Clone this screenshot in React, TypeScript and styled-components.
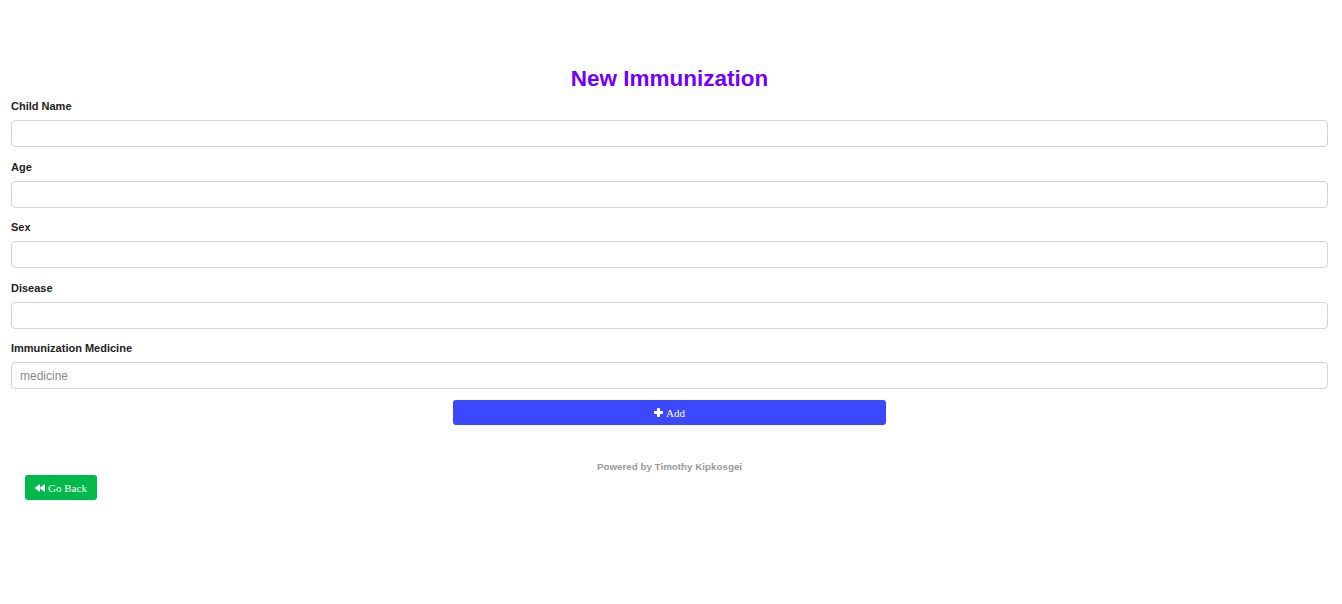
import React from "react";
import styled, { createGlobalStyle } from "styled-components";
import { FaBackward } from "react-icons/fa";

const Global = createGlobalStyle`
  html, body { margin: 0; padding: 0; background: #fff; }
  body { font-family: "Liberation Sans", Arial, sans-serif; }
  * { box-sizing: border-box; }
`;

const Page = styled.div`
  padding: 66px 14px 0 11px;
  display: flex;
  flex-direction: column;
`;

const Title = styled.h2`
  margin: 0 0 7px;
  font-size: 22.5px;
  line-height: 26px;
  font-weight: 700;
  text-align: center;
  color: #7000ff;
`;

const Form = styled.form`
  display: flex;
  flex-direction: column;
`;

const Group = styled.div`
  display: flex;
  flex-direction: column;
  margin-bottom: 12.5px;
`;

const Label = styled.label`
  font-size: 11px;
  line-height: 15px;
  font-weight: 700;
  color: #222;
  margin-bottom: 6px;
`;

const Input = styled.input`
  height: 27px;
  width: 100%;
  border: 1px solid #d4d4d4;
  border-radius: 4px;
  padding: 0 8px;
  font-family: "Liberation Sans", Arial, sans-serif;
  font-size: 12px;
  color: #333;
  background: #fff;
  outline: none;
  &::placeholder { color: #888; }
`;

const ButtonRow = styled.div`
  display: flex;
  justify-content: center;
  margin-top: -1.5px;
`;

const AddButton = styled.button`
  width: 433px;
  height: 25px;
  border: none;
  border-radius: 3px;
  background: #3b48ff;
  color: #fff;
  font-family: "Liberation Serif", "Times New Roman", serif;
  font-size: 11px;
  display: flex;
  align-items: center;
  justify-content: center;
  gap: 3px;
  cursor: pointer;
`;

const Footer = styled.p`
  margin: 36px 0 0;
  text-align: center;
  font-size: 9.8px;
  line-height: 12px;
  font-weight: 700;
  color: #9a9a9a;
`;

const BackRow = styled.div`
  display: flex;
  padding-left: 14px;
  margin-top: 2px;
`;

const BackButton = styled.button`
  width: 72px;
  height: 25px;
  border: none;
  border-radius: 3px;
  background: #00b94a;
  color: #fff;
  font-family: "Liberation Serif", "Times New Roman", serif;
  font-size: 11px;
  display: flex;
  align-items: center;
  justify-content: center;
  gap: 3px;
  cursor: pointer;
  svg { width: 10px; height: 10px; }
`;

const PlusIcon = () => (
  <svg width="9" height="9" viewBox="0 0 9 9" aria-hidden="true">
    <rect x="3" y="0" width="3" height="9" rx="0.4" fill="currentColor" />
    <rect x="0" y="3" width="9" height="3" rx="0.4" fill="currentColor" />
  </svg>
);

const fields = [
  { label: "Child Name", placeholder: "" },
  { label: "Age", placeholder: "" },
  { label: "Sex", placeholder: "" },
  { label: "Disease", placeholder: "" },
  { label: "Immunization Medicine", placeholder: "medicine" },
];

export default function App() {
  return (
    <>
      <Global />
      <Page>
        <Title>New Immunization</Title>
        <Form onSubmit={(e) => e.preventDefault()}>
          {fields.map((f) => (
            <Group key={f.label}>
              <Label>{f.label}</Label>
              <Input placeholder={f.placeholder} />
            </Group>
          ))}
          <ButtonRow>
            <AddButton type="submit">
              <PlusIcon /> Add
            </AddButton>
          </ButtonRow>
        </Form>
        <Footer>Powered by Timothy Kipkosgei</Footer>
        <BackRow>
          <BackButton type="button">
            <FaBackward /> Go Back
          </BackButton>
        </BackRow>
      </Page>
    </>
  );
}
